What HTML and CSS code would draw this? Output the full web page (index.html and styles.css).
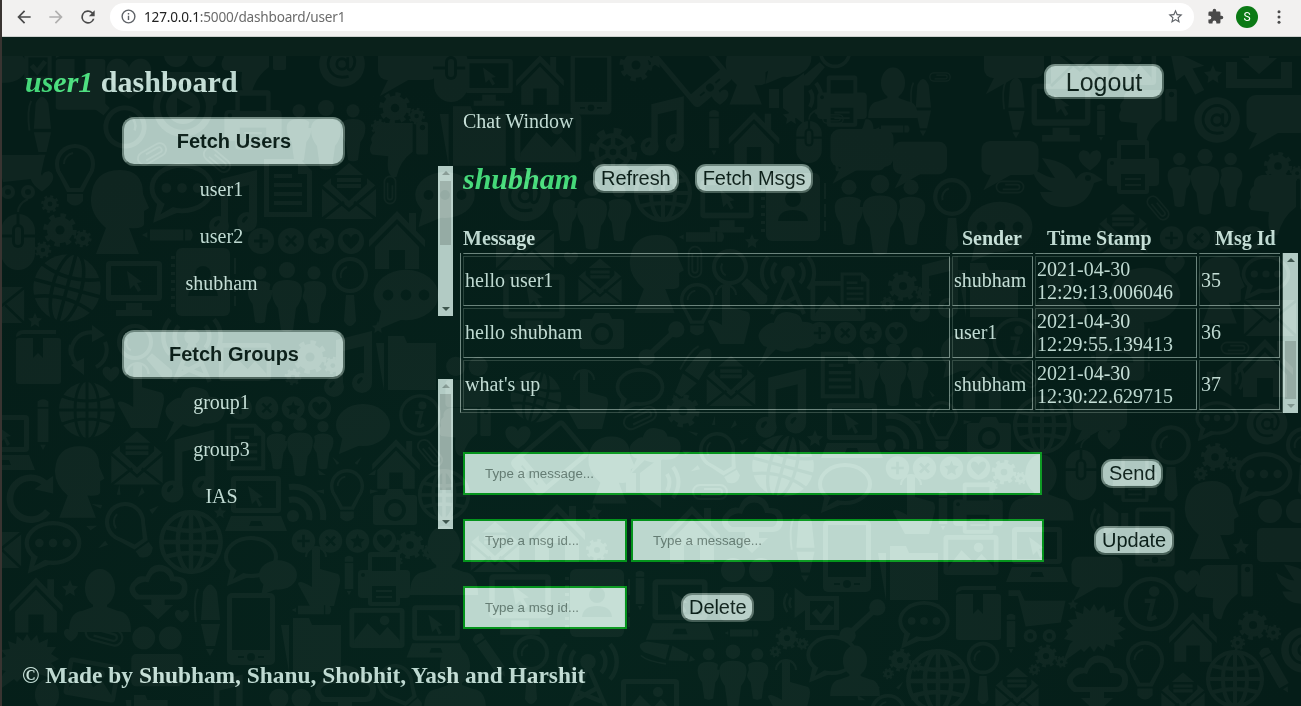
FILE: index.html
```html
<!DOCTYPE html>
<html lang="en">
<head>
<meta charset="utf-8">
<title>Dashboard</title>
<link rel="stylesheet" href="styles.css">
</head>
<body>
<div class="toolbar">
  <svg class="ico back" viewBox="0 0 24 24"><path d="M20 11H7.8l5.6-5.6L12 4l-8 8 8 8 1.4-1.4L7.8 13H20z"/></svg>
  <svg class="ico forward" viewBox="0 0 24 24"><path d="M12 4l-1.4 1.4 5.6 5.6H4v2h12.2l-5.6 5.6L12 20l8-8z"/></svg>
  <svg class="ico reload" viewBox="0 0 24 24"><path d="M17.65 6.35A8 8 0 1 0 19.73 14h-2.08A6 6 0 1 1 12 6c1.66 0 3.14.69 4.22 1.78L13 11h7V4z"/></svg>
  <div class="address">
    <svg class="ico info" viewBox="0 0 24 24"><path d="M11 7h2v2h-2zm0 4h2v6h-2zm1-9a10 10 0 1 0 0 20 10 10 0 0 0 0-20zm0 18a8 8 0 1 1 0-16 8 8 0 0 1 0 16z"/></svg>
    <span class="url"><b>127.0.0.1</b>:5000/dashboard/user1</span>
    <svg class="ico star" viewBox="0 0 24 24"><path d="M22 9.24l-7.19-.62L12 2 9.19 8.63 2 9.24l5.46 4.73L5.82 21 12 17.27 18.18 21l-1.63-7.03zM12 15.4l-3.76 2.27 1-4.28-3.32-2.88 4.38-.38L12 6.1l1.71 4.04 4.38.38-3.32 2.88 1 4.28z"/></svg>
  </div>
  <svg class="ico puzzle" viewBox="0 0 24 24"><path d="M20.5 11H19V7a2 2 0 0 0-2-2h-4V3.5a2.5 2.5 0 0 0-5 0V5H4a2 2 0 0 0-2 2v3.8h1.5a2.7 2.7 0 0 1 0 5.4H2V20c0 1.100.9 2 2 2h3.800v-1.500a2.700 2.700 0 0 1 5.400 0V22H17a2 2 0 0 0 2-2v-4h1.500a2.500 2.500 0 0 0 0-5z"/></svg>
  <span class="avatar">S</span>
  <svg class="ico dots" viewBox="0 0 24 24"><circle cx="12" cy="5" r="2"/><circle cx="12" cy="12" r="2"/><circle cx="12" cy="19" r="2"/></svg>
</div>

<div class="page">
  <header class="head">
    <h1><i>user1</i> dashboard</h1>
    <button class="btn logout">Logout</button>
  </header>
  <main class="columns">
    <aside class="side">
      <section class="group">
        <button class="btn fetch">Fetch Users</button>
        <div class="scroll">
          <ul><li>user1</li><li>user2</li><li>shubham</li></ul>
          <div class="bar"><span class="up faint"></span><span class="thumb t-users"></span><span class="down"></span></div>
        </div>
      </section>
      <section class="group">
        <button class="btn fetch">Fetch Groups</button>
        <div class="scroll">
          <ul><li>group1</li><li>group3</li><li>IAS</li></ul>
          <div class="bar"><span class="up faint"></span><span class="thumb t-groups"></span><span class="down"></span></div>
        </div>
      </section>
    </aside>
    <section class="chat">
      <div class="chat-title">Chat Window</div>
      <div class="peer"><h2>shubham</h2><button class="btn small">Refresh</button><button class="btn small">Fetch Msgs</button></div>
      <div class="heads"><b>Message</b><b>Sender</b><b>Time Stamp</b><b>Msg Id</b></div>
      <div class="log">
        <div class="log-view">
          <table>
            <colgroup><col class="c1"><col class="c2"><col class="c3"><col class="c4"></colgroup>
            <tr><td></td><td></td><td></td><td></td></tr>
            <tr><td>hello user1</td><td>shubham</td><td>2021-04-30 12:29:13.006046</td><td>35</td></tr>
            <tr><td>hello shubham</td><td>user1</td><td>2021-04-30 12:29:55.139413</td><td>36</td></tr>
            <tr><td>what's up</td><td>shubham</td><td>2021-04-30 12:30:22.629715</td><td>37</td></tr>
          </table>
        </div>
        <div class="bar"><span class="up"></span><span class="thumb t-log"></span><span class="down faint"></span></div>
      </div>
      <div class="form send"><input class="w-send" placeholder="Type a message..."><button class="btn small">Send</button></div>
      <div class="form update"><input class="w-id" placeholder="Type a msg id..."><input class="w-msg" placeholder="Type a message..."><button class="btn small">Update</button></div>
      <div class="form delete"><input class="w-id" placeholder="Type a msg id..."><button class="btn small">Delete</button></div>
    </section>
  </main>
  <footer>© Made by Shubham, Shanu, Shobhit, Yash and Harshit</footer>
</div>

<svg class="doodles" width="1299" height="650" viewBox="2 56 1299 650">
  <defs>
    <g id="bubble"><ellipse rx="27" ry="21"/><path d="M-20 10L-24 29 0 19z"/></g>
    <g id="bubbleline"><use href="#bubble"/><ellipse class="k" rx="23" ry="17"/><path class="k" d="M-14 12L-18 22-6 15z"/></g>
    <g id="talk"><use href="#bubbleline"/><circle cx="-13" r="4"/><circle r="4"/><circle cx="13" r="4"/></g>
    <g id="talkfill"><use href="#bubble"/><circle class="k" cx="-15" r="4.500"/><circle class="k" r="4.500"/><circle class="k" cx="15" r="4.500"/></g>
    <g id="box"><rect x="-30" y="-18" width="60" height="36" rx="9"/><path d="M-18 14L-28 34 2 17z"/></g>
    <g id="burst"><path d="M-31 0l7-4-5-6 9-1-2-8 8 3 1-8 6 5 4-7 4 7 6-6 2 8 9-4-1 8 9 0-5 7 8 5-8 4 5 6-9 1 1 7-9-3-2 7-6-5-4 6-4-6-6 6-3-3-18 13 7-18 3-3-9-2 4-5z"/></g>
    <g id="heart"><path d="M0 13C-22-1-13-13-7-12-3-12 0-8 0-6 0-8 3-12 7-12 13-13 22-1 0 13z"/></g>
    <g id="starx"><path d="M0-10l3 7 7 1-5 5 1 7-6-4-6 4 1-7-5-5 7-1z"/></g>
    <g id="gear"><circle r="17" /><circle r="19" fill="none" stroke="#fff" stroke-width="6" stroke-dasharray="7 7.920"/><circle class="k" r="6"/></g>
    <g id="gears"><use href="#gear" transform="scale(.8)"/><use href="#gear" transform="translate(24 9) scale(.42)"/><use href="#gear" transform="translate(-18 21) scale(.4)"/></g>
    <g id="wheel"><use href="#gear"/><circle class="k" r="13"/><circle r="7"/><path class="l" d="M0-14V14M-12-7L12 7M-12 7L12-7"/><circle class="k" r="3"/></g>
    <g id="globe"><circle r="28"/><g class="s"><ellipse rx="12" ry="30"/><path d="M0-30V30M-30 0H30M-25-14Q0-4 25-14M-25 14Q0 4 25 14"/></g></g>
    <g id="globeline"><g class="l"><circle r="27"/><ellipse rx="12" ry="27"/><path d="M0-27V27M-27 0H27M-22-13Q0-7 22-13M-22 13Q0 7 22 13"/></g></g>
    <g id="lens"><circle r="18"/><circle class="k" r="14"/><path class="l thin" d="M-9 3A9 9 0 0 1-3-8"/><path d="M-4 20H4L6 46Q0 56-6 46z"/></g>
    <g id="bulb"><circle r="20"/><path d="M-19 6L-8 28H8L19 6z"/><circle class="k" r="16"/><path class="k" d="M-15 6L-5 24H5L15 6z"/><path class="l thin" d="M-11 0A11 11 0 0 1-2-11"/><path d="M-8 30H8V37Q0 46-8 37z"/></g>
    <g id="sun"><use href="#bulb"/><path d="M-25-13l-9-6 1 6zM25-13l9-6-1 6zM-12-25l-5-9 8 7zM12-25l5-9-8 7zM-27 4l-10 2 10 3zM27 4l10 2-10 3z"/></g>
    <g id="doc"><path d="M-24-29H12L24-17V29H-24z"/><path class="k" d="M-19-24H10V-14H19V24H-19z"/><path class="l" d="M-14-12H4M-14-3H14M-14 6H14M-14 15H14"/></g>
    <g id="letter"><path d="M-27-4L0-27 27-4V29H-27z"/><path class="k" d="M-18-6V-15H18V-6L0 11z"/><path class="l" d="M-12-10H12M-12-4H12"/><path class="s" d="M-28-4L0 20 28-4M-28 30L-5 12M28 30L5 12"/></g>
    <g id="mail"><rect x="-29" y="-20" width="58" height="40" rx="2"/><path class="s" d="M-29-19L0 4 29-19M-29 20L-8 0M29 20L8 0"/></g>
    <g id="clip"><g class="l thin"><rect x="-17" y="-7" width="34" height="14" rx="7"/><path d="M-6-3H9a3 3 0 0 1 0 6H-9"/></g></g>
    <g id="music"><path d="M-14-23L22-32V20H14V-17L-7-12V25H-14z"/><circle cx="-16" cy="24" r="10"/><circle cx="12" cy="20" r="10"/><path class="k" d="M-21 24a6 6 0 0 1 5-6l1 2-4 5zM7 20a6 6 0 0 1 5-6l1 2-4 5z"/></g>
    <g id="mouse"><rect x="-17" y="-28" width="34" height="56" rx="17"/><path class="s" d="M-18-6H18M0-28V-6"/><rect class="k" x="-6" y="-18" width="12" height="24" rx="6"/><rect x="-3" y="-15" width="6" height="18" rx="3"/><path class="l thin" d="M0-30Q0-38 10-43"/></g>
    <g id="home"><path d="M-28 0L0-29 28 0V7L0-21-28 7z"/><path d="M-22 7L0-16 22 7V29H8V10H-8V29H-22zM12-27H19V-8L12-15z"/></g>
    <g id="screen"><rect x="-28" y="-27" width="56" height="40" rx="4"/><rect class="k" x="-23" y="-22" width="46" height="29"/><path d="M-7-17L8-6 3-5 7 2 4 4 0-3-4 1zM-8 15H8V22H18V28H-18V22H-8z"/></g>
    <g id="laptop"><rect x="-25" y="-27" width="50" height="37" rx="4"/><rect class="k" x="-20" y="-22" width="40" height="27"/><path d="M-8-17L7-6 2-5 6 2 3 4 0-3-4 1zM-25 13H25L31 28H-31z"/><path class="k" d="M-5 18H5L7 23H-7z"/></g>
    <g id="tablet"><rect x="-24" y="-36" width="48" height="72" rx="5"/><rect class="k" x="-19" y="-31" width="38" height="52"/><circle class="k" cy="28" r="4"/><path class="s thin" d="M-13 28H-7M7 28H13"/></g>
    <g id="notebook"><rect x="-27" y="-34" width="54" height="68" rx="6"/><circle class="k" cy="-8" r="8"/><path class="k" d="M-15 14Q-14 3 0 3 14 3 15 14z"/><path class="l" d="M-30-26V30" stroke-dasharray="3 5"/><path class="l thin" d="M32-24V-8M32-3V10M32 14V24"/></g>
    <g id="book"><rect x="-22" y="-19" width="45" height="46" rx="3"/><path d="M-22-20Q-22-27-14-27H18V-23H-16z"/><path class="k" d="M-5-19H5V1L0-4-5 1z"/></g>
    <g id="photo"><rect x="-29" y="-21" width="58" height="42" rx="4"/><rect class="k" x="-24" y="-16" width="48" height="32"/><path d="M-24 13L-10-5 3 8 11-1 24 13V17H-24z"/><circle cx="8" cy="-8" r="5"/></g>
    <g id="folder"><path d="M-20-27H-4L-1-20H28V27H-20zM-32-20H-24V27z"/></g>
    <g id="camera"><rect x="-22" y="-12" width="44" height="30" rx="3"/><path d="M-10-12L-7-18H7L10-12z"/><circle class="k" cy="3" r="11"/><circle cy="3" r="7"/></g>
    <g id="printer"><rect x="-26" y="-10" width="52" height="28" rx="4"/><rect x="-16" y="-28" width="32" height="54" rx="3"/><rect class="k" x="-12" y="-23" width="24" height="14"/><rect class="k" x="-12" y="6" width="24" height="16"/><path class="l thin" d="M-8 11H8M-8 17H8"/><circle class="k" cx="-21" cy="-5" r="2"/></g>
    <g id="man"><circle cy="-27" r="8"/><path d="M-15-6Q-15-17 0-17 15-17 15-6 15 4 9 11L6 33Q0 36-6 33L-9 11Q-15 4-15-6z"/></g>
    <g id="people"><use href="#man" transform="translate(-27 -2) scale(.82)"/><use href="#man" transform="translate(27 -2) scale(.82)"/><path class="s" d="M-16-7Q-16-19 0-19 16-19 16-7L10 12"/><use href="#man"/></g>
    <g id="bust"><ellipse cy="-14" rx="15" ry="19"/><path d="M-31 30Q-31 10-18 9L-7 5V-5H7V5L18 9Q31 10 31 30z"/></g>
    <g id="profile"><path d="M-22 42L-12 16Q-28 2-27-14-25-42 2-42 25-42 25-18L31-4 26-1V12Q26 17 11 16L21 42z"/></g>
    <g id="plus"><circle r="13"/><path class="s" d="M0-7V7M-7 0H7"/></g>
    <g id="cross"><circle r="13"/><path class="s" d="M-5-5L5 5M5-5L-5 5"/></g>
    <g id="fav"><circle r="13"/><path class="k" d="M0-8l2 5 6 1-4 4 1 6-5-3-5 3 1-6-4-4 6-1z"/></g>
    <g id="like"><circle r="13"/><path class="k" d="M0 8C-13-1-8-8-4-7-2-7 0-4 0-3 0-4 2-7 4-7 8-8 13-1 0 8z"/></g>
    <g id="row"><use href="#plus" x="-45"/><use href="#cross" x="-15"/><use href="#fav" x="15"/><use href="#like" x="45"/></g>
    <g id="at"><circle r="24"/><g class="s"><circle r="5.500"/><path d="M6-7V4Q7 8 11 5 16-3 11-10 4-18-6-14-17-8-14 4-9 17 7 13"/></g></g>
    <g id="i"><circle class="l" r="24"/><circle cx="3" cy="-12" r="5"/><path class="l" d="M-6-3H2L-2 13Q-2 16 5 12"/></g>
    <g id="reload"><path class="l fat" d="M14-13A19 19 0 1 0 16 12"/><path d="M4-8L21-20V-4z"/></g>
    <g id="cycle"><path class="l" d="M-8 17A19 19 0 0 1 8-17M8 17A19 19 0 0 0 17-8M-17 5A19 19 0 0 1-17-5"/><path d="M4-25L17-15 4-8zM-4 25L-17 15-4 8z"/></g>
    <g id="thumbs"><rect x="-31" y="-5" width="13" height="36" rx="2"/><path d="M-14-2Q0-12 4-30 16-32 13-7L31-5Q36 0 31 8 34 14 28 19 29 28 20 30H-14z"/><circle class="k" cx="-25" cy="25" r="3"/></g>
    <g id="finger"><path d="M-8-28Q-3-32 0-28V-8L18-3Q22 0 18 13L14 29H-10L-22 7Q-22 2-8 10z"/><path class="l thin" d="M-14-20A10 10 0 1 1 6-20"/></g>
    <g id="pencil"><path d="M-6-25Q0-30 6-25V20H-6zM-3 23H3L0 29z"/><path class="s thin" d="M-7-18H7"/></g>
    <g id="pen"><path d="M-7-25Q0-40 7-25L10 3H-9zM-9 7H10L5 29H-4zM-4 32H4L0 39z"/><path class="l thin" d="M-12-28Q-17-18-14 5"/></g>
    <g id="cloud"><path d="M-23 12Q-36 2-25-8-21-14-13-12-7-29 8-23 16-20 17-12 31-13 31 0 31 12 20 12z"/><path class="k" d="M-20 7Q-28 1-21-4-15-8-10-6-6-20 6-17 12-14 13-7 26-8 25 1 24 7 19 7z"/><path d="M-7 10H7V18H16L0 33-16 18H-7z"/></g>
    <g id="puff"><path d="M-22 10Q-32 0-21-8-16-12-13-11-9-24 4-20 12-19 13-12 28-12 27 1 25 14 8 12 0 18-11 13L-27 29-19 11z"/></g>
    <g id="waves"><circle cx="-15" cy="13" r="6"/><path class="l fat" d="M-19-3A17 17 0 0 1 1 17M-19-16A30 30 0 0 1 15 17"/></g>
    <g id="tower"><circle cy="-12" r="7"/><path class="l" d="M0-8L-16 29M0-8L16 29M-10 15L12 24M-14 24L8 12"/><path class="l" d="M-12-2A15 15 0 0 1-12-22M12-2A15 15 0 0 0 12-22M-20 4A24 24 0 0 1-20-28M20 4A24 24 0 0 0 20-28"/></g>
    <g id="speaker"><rect x="-26" y="-9" width="10" height="19"/><path d="M-12-9L9-25V26L-12 10z"/><path class="l" d="M15-8Q20 0 15 9M21-15Q32 0 21 16"/></g>
    <g id="bird"><path d="M-35-22Q-20-12-12-12L-25-32Q4-28 9-11 16-22 27-16L36-10 27-7Q21 16-1 17-22 18-27 2L-14 2Q-31-4-35-22z"/><circle class="k" cx="21" cy="-12" r="3"/></g>
    <g id="share"><circle cx="-16" cy="17" r="9"/><circle cx="17" cy="-14" r="9"/><path class="l fat" d="M-12 13L13-10"/></g>
    <g id="check"><rect x="-17" y="-17" width="34" height="34"/><rect class="k" x="-12" y="-12" width="24" height="24"/><path class="l fat" d="M-8-2L-1 6 9-7"/></g>
    <g id="play"><circle r="30"/><circle class="k" r="23"/><circle r="17"/><path class="k" d="M-6-9L10 0-6 9z"/></g>
    <g id="team"><circle cx="-14" cy="-17" r="12"/><circle cx="14" cy="-17" r="12"/><rect x="-27" y="0" width="54" height="34" rx="5"/></g>
    <g id="cart"><path d="M-30-26H-18L-13-15H30L25 8-12 12-20-20H-30z"/><circle cx="-7" cy="22" r="7"/><circle cx="13" cy="22" r="7"/><circle class="k" cx="-7" cy="22" r="3"/><circle class="k" cx="13" cy="22" r="3"/></g>
    <g id="arrow"><path d="M-20-25L18-7 5-4 18 20 8 25-4 3-13 10z"/></g>
    <g id="tray"><path d="M-33-14H-22V3H22V-14H33V12H-33zM-10-30H10V-18H18L0-2-18-18H-10z"/></g>
    <mask id="ink" maskUnits="userSpaceOnUse" x="0" y="56" width="1301" height="650"><g id="stamps" fill="#fff"></g></mask>
  </defs>
  <rect class="tint" x="0" y="56" width="1301" height="650" mask="url(#ink)"/>
</svg>
<script src="doodles.js"></script>
</body>
</html>
```

FILE: styles.css
```css
* { box-sizing: border-box; }
body { margin: 0; height: 706px; overflow: hidden; border-left: 2px solid #393431; background: #051d18; color: #bdd8d0; font: 20px/23px "Liberation Serif", serif; }
h1, h2, ul { margin: 0; padding: 0; }

.toolbar { height: 37px; display: flex; align-items: center; padding: 0 13px 3px 12px; background: #f2f1f0; border-bottom: 1px solid #cfd2d0; }
.ico { width: 20px; height: 20px; flex: none; fill: #4a4a4a; }
.forward { margin-left: 12px; fill: #b0afae; }
.reload { margin-left: 12px; }
.address { flex: 1; height: 28px; margin: 0 13px 0 12px; padding: 0 10px; display: flex; align-items: center; border-radius: 14px; background: #fff; }
.address .ico { width: 17px; height: 17px; fill: #5f6368; }
.url { flex: 1; margin-left: 7px; font: 13.6px "Noto Sans", sans-serif; letter-spacing: -.2px; color: #6b6b6b; }
.url b { font-weight: 400; color: #222; }
.puzzle { width: 17px; height: 17px; }
.avatar { width: 22px; height: 22px; margin: 0 12px 0 12px; border-radius: 50%; background: #0b7a15; color: #fff; font: 12px/22px Roboto, sans-serif; text-align: center; }
.dots { width: 18px; height: 18px; }

.page { height: 669px; background: linear-gradient(#0a211b, #0a211b) top / 100% 19px no-repeat, radial-gradient(ellipse 750px 560px at 540px 600px, #06241d, #051d18); }
.head { height: 66px; padding: 27px 137px 0 23px; display: flex; justify-content: space-between; align-items: flex-start; }
h1 { font-size: 30px; line-height: 36px; }
h1 i, h2 { color: #45d879; font-style: italic; }

.btn { flex: none; padding: 0; border: 2px solid; border-color: #6c857d #526b63 #455e56 #6c857d; border-radius: 11px; background: #afc8c1; color: #0b1f19; font-family: "Liberation Sans", sans-serif; }
.logout { width: 120px; height: 35px; font-size: 25px; line-height: 30px; }
.fetch { display: block; width: 223px; height: 49px; margin-left: 118px; padding-left: 1px; font-size: 20px; font-weight: 700; border-radius: 12px; }
.small { height: 29px; padding: 0 6px 1px; font-size: 20px; line-height: 24px; letter-spacing: -.06px; }

.columns { display: flex; height: 530px; padding-left: 2px; }
.side { width: 449px; padding-top: 14px; }
.group { height: 213px; }
.scroll { display: flex; height: 150px; }
ul { flex: 1; padding-left: 1px; list-style: none; text-align: center; }
li { height: 47px; line-height: 46px; }

.bar { flex: none; width: 15px; display: flex; flex-direction: column; align-items: center; padding: 5px 2px; background: #b2cbc4; }
.up, .down { border: 4px solid transparent; }
.up { border-top: 0; border-bottom: 4px solid #3e564e; margin-bottom: 6px; }
.down { border-bottom: 0; border-top: 4px solid #3e564e; margin-top: auto; }
.up.faint { border-bottom-color: #80968f; }
.down.faint { border-top-color: #80968f; }
.thumb { width: 11px; background: #95aba4; }
.t-users { height: 64px; }
.t-groups { height: 96px; }
.t-log { height: 58px; margin-top: 73px; }

.chat { width: 848px; padding: 7px 3px 0 10px; }
.chat-title { height: 31px; }
.peer { display: flex; height: 74px; padding-top: 23px; }
h2 { margin-right: 15px; font-size: 30px; line-height: 30px; }
.peer .btn { margin-right: 16px; }
.heads { height: 38px; padding-top: 12px; display: grid; grid-template-columns: 499px 85px 168px 1fr; }
.log { display: flex; justify-content: space-between; height: 160px; margin-left: -3px; }
.log-view { display: flex; align-items: flex-end; overflow: hidden; }
table { width: 822px; table-layout: fixed; border: 1px solid; border-color: #718a82 #334c44 #334c44 #718a82; border-spacing: 2px; }
td { height: 50px; padding: 0 1px 2px; border: 1px solid; border-color: #2b453d #6b847c #6b847c #2b453d; }
td:nth-child(3) { padding: 1px; }
.c1 { width: 487px; }
.c2 { width: 81px; }
.c3 { width: 162px; }
.c4 { width: 81px; }

.form { display: flex; align-items: center; height: 43px; margin-bottom: 24px; }
.send { margin-top: 39px; }
input { flex: none; height: 43px; padding: 0 20px; border: 2px solid #04931c; background: #bcd7ce; font: 13.33px "Liberation Sans", sans-serif; }
input::placeholder { color: #647c73; opacity: 1; }
.w-send { width: 579px; }
.w-id { width: 164px; }
.w-msg { width: 413px; margin-left: 4px; }
.send .btn { margin-left: 59px; }
.update .btn { margin-left: 50px; }
.delete .btn { margin-left: 54px; }
footer { padding: 29px 0 0 20px; font-size: 23.4px; line-height: 26px; font-weight: 700; }

/* Pattern glows over the page, including buttons and fields */
.doodles { position: absolute; left: 2px; top: 56px; pointer-events: none; mix-blend-mode: plus-lighter; }
.tint { fill: #0a0808; }
.k { fill: #000; }
.l { fill: none; stroke: #fff; stroke-width: 4; }
.s { fill: none; stroke: #000; stroke-width: 3; }
.fat { stroke-width: 6; }
.thin { stroke-width: 2; }
```

FILE: doodles.js
```js
// name, x, y, scale, rotation
const stamps = `
bubble 5 66 .8;check 38 67 .8;book 80 80 1.1;heart 129 78 1.6;team 190 72;thumbs 255 65 1 180;at 342 64 .95;box 408 62;gears 395 108 .9
play 183 107;pen 42 126 .9;cart 15 170;lens 125 127 1.2 130;printer 253 121 1.1;people 326 135;thumbs 400 150 .9 180;bulb 75 164 1;heart 42 181 .8
profile 118 212;talk 182 188 1.2;clip 152 154 .9 -30;clip 217 160 .9 40;music 235 202 1;doc 288 188;letter 349 190 1;clip 390 190 .8 90;talkfill 445 195 1.1
mouse 18 242;gears 60 230 .95;gear 50 204 .4;pencil 168 235 .9 90;row 306 241 1;home 397 240 1;globe 67 288 1.2 15;screen 134 288 1;notebook 203 282 1;people 287 297;lens 350 275 1;talkfill 406 295 1.2
starx 35 320 .7;starx 378 327 .6;mail -2 305 .9;book 38 357 1;cycle 88 350 1;lens 135 342 1 -45;tower 192 350 1.1;photo 245 362 .9;gears 310 357 .95;music 350 363 1;folder 408 363 1;heart 111 374 .6
pencil 43 424 .9;globe 87 410 1;finger 142 396 1.1;puff 195 410 1.1;row 280 408 .88;bubble 363 425 1;i 420 415 .8;laptop 4 442 1;letter 137 457 .95;music 190 465 1.1;doc 246 447 .8;people 300 447 .85
home 396 464 .85;clip 430 453 .9 50;profile 78 482 .85;reload 30 498 1.1;laptop 256 503 1;waves 308 503 1;sun 347 486 .85;camera 395 507 1;globeline 444 495 .9;sun 125 522 1 -35;talk 53 543 1.05;mail -5 550 .9;globeline 191 542 1.1
bubbleline 251 557 1;bubble 278 575 .7;row 344 541 .9;gears 410 545 .8;bust 444 562 1.1;home 36 605 .95;starx 70 588 .8;bust 100 602 1;cloud 158 588 .95;heart 182 616 .5;starx 220 512 .6;pen 210 617 1
tablet 251 629 1;finger 320 577 1;pencil 349 575 .7;printer 384 580 1;pencil 312 610 .7 90;folder 313 645 1;photo 377 628 .95;laptop 436 631 .95;burst 30 660 1;clip 104 635 1.1 15;team 157 654 .95;photo 92 680 .9 10;heart 71 635 .5
bust 47 706 .8;cloud 345 690 1;bulb 395 682 .9 -40;team 290 712 .8;music 225 700 .8;folder 148 714 .7;bust 455 680 1
mouse 451 74 1;screen 489 82 .85;home 540 80 .85;tablet 591 84 .85;gear 636 65 .75;starx 655 60 .8;tablet 692 66 1 -40;profile 746 73 .75;bubble 787 58 .9;lens 835 52 .9 45;speaker 795 98 1;printer 842 102 .95;bust 893 94 .8
pen 923 105 .8;clip 940 77 .6;heart 720 97 .6;thumbs 862 145 .85;pencil 893 129 .6 90;box 920 158 .9;folder 475 136 1.1;photo 548 138 1.15;wheel 613 152 1.1;music 664 125 .9;pencil 714 132 .8;home 754 138 .9;starx 791 116 .8;mouse 809 142 .75;clip 833 119 .6;box 862 148 1.05
at 525 196 1.05;people 592 215 1;globeline 663 193 1;screen 727 206 .95;notebook 793 207 1;people 880 215 1.15;pencil 702 237 .8 90;starx 752 241 .7;mail 525 250 1;clip 695 262 .9 90;lens 730 267 1 -45;tower 788 285 1;photo 838 301 .95;profile 655 274 .93
letter 600 280 .8;bulb 697 300 .85;screen 534 304 1.1;finger 730 315 1;camera 602 331 1;share 661 342 .9;puff 788 335 1.1;row 858 333 .85;heart 571 258 .5;starx 790 335 .5;globe 536 397 .9 15;finger 588 400 1;bubbleline 640 387 .9;pen 693 373 .9 35;letter 731 380 .9
gear 683 411 .75;clip 640 418 1 -25;music 783 402 1.05;doc 840 375 .8;laptop 852 430 1;heart 518 437 .9;tablet 550 458 .95 50;profile 610 470 .8;puff 655 448 .95;sun 717 450 .9 -30;globe 783 466 1.1 15;starx 815 438 .8;bubbleline 845 484 1;thumbs 466 432 .8 180
team 467 380 .8;speaker 652 482 1;clip 710 492 1;home 692 535 1;cloud 752 520 1;home 557 533 1;letter 495 546 .9;gear 597 550 .5;starx 594 512 .8;pen 805 545 .95;tablet 847 556 1;team 747 587 1;screen 520 604 1.1;notebook 597 603 1
pencil 640 590 .7;laptop 680 609 1.1;speaker 800 603 .6 180;check 822 613 1;share 862 620 .9;gears 787 638 .65;bubbleline 832 655 .95;tower 588 675 1.1;lens 531 653 1;pencil 490 655 .9 -35;pen 665 652 .8 -75;people 733 676 .9;finger 790 690 1;photo 650 700 1;pencil 742 633 .6 90
lens 952 197 1.05;clip 1010 187 .8;talkfill 1000 227 1.2;bird 1067 190 1;printer 1133 168 1;people 1205 182 .95;gears 1278 166 .8;thumbs 1282 205 1 180;letter 1123 228 .9;clip 1158 208 .8 50;row 1212 238 .9;gears 903 286 .85;music 936 288 1;folder 990 290 1;bubble 1145 295 1.3
heart 1175 265 .7;profile 1220 290 .8;talk 1266 274 .9;i 1016 341 .9;bubble 965 352 .9;people 893 375 .9;clip 1235 348 .8;home 1265 368 1;mail 1270 318 .9;notebook 1120 350 .9;bust 1060 292 .9;home 982 384 .85;clip 1024 375 .9 40;speaker 1225 378 .7;doc 855 290 .6
waves 905 432 1;sun 942 417 .8;camera 989 435 1;globeline 1042 425 1;box 1100 414 .9;heart 1109 439 .8;lens 1171 445 1.1;talk 1217 418 .8;at 1267 424 .85;mouse 1081 475 .9;gears 1215 457 .8;talk 1264 474 1.05;row 938 468 .9;gears 1004 472 .7;bust 1041 489 1.05;printer 1135 480 .85
profile 1210 520 .93;team 1284 528 1;finger 915 505 1;pencil 943 510 .7;printer 978 509 .95;folder 910 573 1;photo 971 555 .95;laptop 1037 554 1;box 1097 572 .85;tablet 1155 537 .82;starx 1241 546 .8;speaker 1110 520 .7 180;talk 924 621 .95;book 978 613 1;cart 1037 615 .95;burst 1097 630 1
i 1151 604 1.05;heart 1187 581 .9;thumbs 1225 592 .9 180;home 1193 637 .85;gears 1253 625 .85;starx 1073 604 .5;lens 983 658 .9;globeline 938 681 1.1;gears 900 660 .65;gears 1046 656 .65;cloud 1097 680 1;bulb 1145 660 .95;letter 1017 689 .8;letter 1183 694 .8;globeline 1235 679 1
pencil 1275 670 .9 -30;at 1304 650 .95;pencil 1011 633 .7;sun 888 712 .9;bust 855 672 .8;bird 1304 590 .8;screen 1061 112 1.05;pencil 1101 122 .65;thumbs 1149 117 .9 180;arrow 1188 72 .9;starx 1213 74 .9;tray 1259 76 1;at 1217 120 .95;box 1278 114 1.05;heart 1090 160 .8;box 1010 158 .95
pen 1016 105 .85;mail 1080 66 1;photo 1130 66 .9;box 1014 60 1;lens 1304 445 1`;
const ns = "http://www.w3.org/2000/svg";
const layer = document.getElementById("stamps");
for (const entry of stamps.trim().split(/[;\n]/)) {
  const [name, x, y, scale = 1, turn = 0] = entry.trim().split(/\s+/);
  const use = document.createElementNS(ns, "use");
  use.setAttribute("href", "#" + name);
  use.setAttribute("transform", `translate(${x} ${y}) rotate(${turn}) scale(${scale})`);
  layer.append(use);
}
```
